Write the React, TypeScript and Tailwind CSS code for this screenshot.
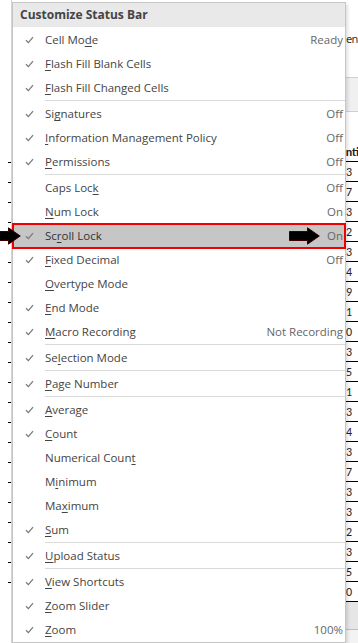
import React from 'react';

type Item = {
  label: string;
  key: number; // index of the access-key letter
  value?: string;
  checked?: boolean;
  sep?: boolean;
  active?: boolean;
};

const items: Item[] = [
  { label: 'Cell Mode', key: 7, value: 'Ready', checked: true },
  { label: 'Flash Fill Blank Cells', key: 0, checked: true },
  { label: 'Flash Fill Changed Cells', key: 0, checked: true, sep: true },
  { label: 'Signatures', key: 2, value: 'Off', checked: true },
  { label: 'Information Management Policy', key: 0, value: 'Off', checked: true },
  { label: 'Permissions', key: 0, value: 'Off', checked: true, sep: true },
  { label: 'Caps Lock', key: 8, value: 'Off' },
  { label: 'Num Lock', key: 0, value: 'On' },
  { label: 'Scroll Lock', key: 2, value: 'On', checked: true, active: true },
  { label: 'Fixed Decimal', key: 0, value: 'Off', checked: true },
  { label: 'Overtype Mode', key: 0 },
  { label: 'End Mode', key: 0, checked: true },
  { label: 'Macro Recording', key: 0, value: 'Not Recording', checked: true, sep: true },
  { label: 'Selection Mode', key: 2, checked: true, sep: true },
  { label: 'Page Number', key: 0, checked: true, sep: true },
  { label: 'Average', key: 0, checked: true },
  { label: 'Count', key: 0, checked: true },
  { label: 'Numerical Count', key: 14 },
  { label: 'Minimum', key: 1 },
  { label: 'Maximum', key: 2 },
  { label: 'Sum', key: 0, checked: true, sep: true },
  { label: 'Upload Status', key: 0, checked: true, sep: true },
  { label: 'View Shortcuts', key: 0, checked: true },
  { label: 'Zoom Slider', key: 0, checked: true },
  { label: 'Zoom', key: 0, value: '100%', checked: true },
];

const digits = ['3', '7', '3', '2', '3', '4', '9', '1', '0', '3', '5', '1', '3', '4', '3', '7', '3', '3', '2', '3', '5', '0'];

function Check() {
  return (
    <svg width="9" height="8" viewBox="0 0 9 8" fill="none">
      <path d="M1 4.2 L3.4 6.6 L8 1.2" stroke="#7a7a7a" strokeWidth="1.3" />
    </svg>
  );
}

function Arrow({ className }: { className?: string }) {
  return (
    <svg className={className} width="31" height="18" viewBox="0 0 31 18">
      <polygon
        points="0.5,4.5 18.5,4.5 18.5,0.8 30.3,9 18.5,17.2 18.5,13.5 0.5,13.5"
        fill="#000"
        stroke="#3a0000"
        strokeWidth="1"
      />
    </svg>
  );
}

function Label({ text, k }: { text: string; k: number }) {
  return (
    <span>
      {text.slice(0, k)}
      <span className="underline underline-offset-2 decoration-[1px]">{text[k]}</span>
      {text.slice(k + 1)}
    </span>
  );
}

function Sheet() {
  return (
    <div className="absolute inset-0 flex">
      {/* left strip */}
      <div className="w-[12px] flex flex-col pt-[162px] border-r border-[#d4d4d4]">
        {digits.map((_, i) => (
          <div key={i} className="h-[20px] flex justify-end items-start">
            <div className="w-[3px] h-[1px] bg-black" />
          </div>
        ))}
      </div>
      <div className="flex-1" />
      {/* right strip: worksheet cells peeking out */}
      <div className="w-[12px] flex flex-col bg-white text-[12px] text-[#222] leading-none" style={{ fontFamily: 'Calibri, "Liberation Sans", sans-serif' }}>
        <div className="h-[77px] flex items-start pt-[33px] text-[#333]" style={{ fontFamily: '"Noto Sans", sans-serif' }}>
          <span className="text-[11px] tracking-[-0.6px]">en</span>
        </div>
        <div className="h-[35px] bg-[#f0f0f0] border-t border-[#d0d0d0] border-b border-[#c8c8c8]" />
        <div className="h-[30px]" />
        <div className="h-[20px] flex items-center justify-end overflow-hidden font-bold whitespace-nowrap border-b border-black">
          <span className="-mr-[1px]">nti</span>
        </div>
        {digits.map((d, i) => (
          <div key={i} className="h-[20px] flex items-center justify-end pr-[6px] border-b border-black">
            {d}
          </div>
        ))}
        <div className="h-[28px] bg-[#e6e6e6] border-b border-[#bdbdbd]" />
        <div className="flex-1 bg-[#f3f3f3]" />
      </div>
    </div>
  );
}

export default function App() {
  return (
    <div
      className="relative w-[358px] h-[643px] overflow-hidden bg-white"
      style={{ fontFamily: '"Open Sans", "Noto Sans", sans-serif' }}
    >
      <Sheet />

      {/* Context menu */}
      <div className="absolute left-[12px] top-[2px] w-[334px] bg-white border border-[#c6c6c6] shadow-[2px_2px_3px_rgba(0,0,0,0.12)]">
        <div className="h-[24px] bg-[#e9e9e9] flex items-center pl-[7px] text-[12px] font-bold text-[#444]">
          Customize Status Bar
        </div>
        <div className="pt-[1px]">
          {items.map((it) => (
            <div key={it.label} className={it.active ? 'relative z-10' : ''}>
              <div
                className={
                  it.active
                    ? 'relative h-[24px] flex items-center bg-[#c6c6c6] text-[11.5px] text-[#333]'
                    : 'h-[24px] flex items-center text-[11.5px] text-[#444]'
                }
              >
                <div className="w-[32px] flex justify-center pl-[1px]">{it.checked && <Check />}</div>
                <div className="flex-1 whitespace-nowrap">
                  <Label text={it.label} k={it.key} />
                </div>
                {it.value && <div className="pr-[2px] text-[#666] whitespace-nowrap">{it.value}</div>}
                {it.active && (
                  <>
                    <Arrow className="absolute left-[276px] top-[3px]" />
                    <div className="absolute -top-[1px] -bottom-[1px] -left-[1px] -right-[1px] border-2 border-[#ee0000] pointer-events-none" />
                  </>
                )}
              </div>
              {it.sep && (
                <div className="h-[2px] pl-[32px]">
                  <div className="h-[1px] bg-[#d9d9d9]" />
                </div>
              )}
            </div>
          ))}
        </div>
      </div>

      {/* left pointer arrow */}
      <Arrow className="absolute -left-[10px] top-[227px] z-20" />
    </div>
  );
}
